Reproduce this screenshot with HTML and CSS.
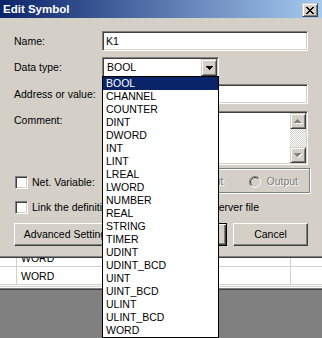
FILE: index.html
```html
<!DOCTYPE html>
<html>
<head>
<meta charset="utf-8">
<title>Edit Symbol</title>
<link rel="stylesheet" href="styles.css">
</head>
<body>
<div class="screen">
  <div class="sheet">
    <div class="sheet-row"><span></span><span>WORD</span><span></span></div>
    <div class="sheet-row"><span></span><span>WORD</span><span></span></div>
  </div>
  <div class="sheet-foot"></div>
  <div class="workspace"></div>

  <div class="dialog">
    <div class="caption">
      <span class="caption-title">Edit Symbol</span>
      <span class="close raised">
        <svg width="8" height="7" viewBox="0 0 8 7" shape-rendering="crispEdges"><path fill="#000" d="M0 0h2v1H0zM6 0h2v1H6zM1 1h2v1H1zM5 1h2v1H5zM2 2h4v1H2zM3 3h2v1H3zM2 4h4v1H2zM1 5h2v1H1zM5 5h2v1H5zM0 6h2v1H0zM6 6h2v1H6z"/></svg>
      </span>
    </div>
    <div class="dlg-body">
      <div class="field">
        <span class="lbl">Name:</span>
        <div class="edit">K1</div>
      </div>
      <div class="field field-combo">
        <span class="lbl">Data type:</span>
        <div class="combo">
          <span class="combo-text">BOOL</span>
          <span class="combo-btn raised">
            <svg width="7" height="4" viewBox="0 0 7 4" shape-rendering="crispEdges"><path fill="#000" d="M0 0h7v1H0zM1 1h5v1H1zM2 2h3v1H2zM3 3h1v1H3z"/></svg>
          </span>
          <ul class="droplist">
            <li class="selected">BOOL</li>
            <li>CHANNEL</li>
            <li>COUNTER</li>
            <li>DINT</li>
            <li>DWORD</li>
            <li>INT</li>
            <li>LINT</li>
            <li>LREAL</li>
            <li>LWORD</li>
            <li>NUMBER</li>
            <li>REAL</li>
            <li>STRING</li>
            <li>TIMER</li>
            <li>UDINT</li>
            <li>UDINT_BCD</li>
            <li>UINT</li>
            <li>UINT_BCD</li>
            <li>ULINT</li>
            <li>ULINT_BCD</li>
            <li>WORD</li>
          </ul>
        </div>
      </div>
      <div class="field field-addr">
        <span class="lbl">Address or value:</span>
        <div class="edit"></div>
      </div>
      <div class="field field-comment">
        <span class="lbl lbl-top">Comment:</span>
        <div class="memo">
          <div class="vscroll">
            <span class="sb-btn raised">
              <svg width="8" height="5" viewBox="0 0 8 5" shape-rendering="crispEdges"><path fill="#fff" d="M4 1h1v1H4zM3 2h3v1H3zM2 3h5v1H2zM1 4h7v1H1z"/><path fill="#808080" d="M3 0h1v1H3zM2 1h3v1H2zM1 2h5v1H1zM0 3h7v1H0z"/></svg>
            </span>
            <span class="sb-track"></span>
            <span class="sb-btn raised">
              <svg width="8" height="5" viewBox="0 0 8 5" shape-rendering="crispEdges"><path fill="#fff" d="M1 1h7v1H1zM2 2h5v1H2zM3 3h3v1H3zM4 4h1v1H4z"/><path fill="#808080" d="M0 0h7v1H0zM1 1h5v1H1zM2 2h3v1H2zM3 3h1v1H3z"/></svg>
            </span>
          </div>
        </div>
      </div>

      <div class="net-row">
        <label class="check"><span class="box"></span><span>Net. Variable:</span></label>
        <div class="io-group">
          <span class="radio radio-in">
            <svg width="12" height="12" viewBox="0 0 12 12"><circle cx="6" cy="6" r="5" fill="#d4d0c8"/><path d="M2.1 9.9A5.5 5.5 0 0 1 9.9 2.1" fill="none" stroke="#808080"/><path d="M9.9 2.1A5.5 5.5 0 0 1 2.1 9.9" fill="none" stroke="#fff"/><path d="M2.8 9.2A4.5 4.5 0 0 1 9.2 2.8" fill="none" stroke="#404040"/><path d="M9.2 2.8A4.5 4.5 0 0 1 2.8 9.2" fill="none" stroke="#d4d0c8"/></svg>
            <span class="radio-text">Input</span>
          </span>
          <span class="radio radio-out">
            <svg width="12" height="12" viewBox="0 0 12 12"><circle cx="6" cy="6" r="5" fill="#d4d0c8"/><path d="M2.1 9.9A5.5 5.5 0 0 1 9.9 2.1" fill="none" stroke="#808080"/><path d="M9.9 2.1A5.5 5.5 0 0 1 2.1 9.9" fill="none" stroke="#fff"/><path d="M2.8 9.2A4.5 4.5 0 0 1 9.2 2.8" fill="none" stroke="#404040"/><path d="M9.2 2.8A4.5 4.5 0 0 1 2.8 9.2" fill="none" stroke="#d4d0c8"/></svg>
            <span class="radio-text">Output</span>
          </span>
        </div>
      </div>

      <label class="check link-row"><span class="box"></span><span>Link the definition of symbol to the CX-Server file</span></label>

      <div class="buttons">
        <span class="btn btn-adv">Advanced Settings...</span>
        <span class="btn btn-default">OK</span>
        <span class="btn btn-cancel">Cancel</span>
      </div>
    </div>
  </div>
</div>
</body>
</html>
```
FILE: styles.css
```css
* { box-sizing: border-box; }

html, body {
  margin: 0;
  padding: 0;
}

body {
  width: 322px;
  height: 338px;
  overflow: hidden;
  font: 10.5px/13px "Liberation Sans", Arial, sans-serif;
  color: #000;
}

.screen {
  position: relative;
  width: 322px;
  height: 338px;
  display: flex;
  flex-direction: column;
  background: #808080;
}

/* background symbol sheet (upper rows hidden by the dialog) */
.sheet {
  background: #fff;
  padding-top: 249px;
  flex: none;
}

.sheet-row {
  display: grid;
  grid-template-columns: 17px 274px 1fr;
  height: 18px;
}

.sheet-row > span {
  border-right: 1px solid #d4d0c8;
  border-bottom: 1px solid #d4d0c8;
  padding-left: 4px;
  line-height: 19px;
  white-space: nowrap;
  overflow: hidden;
}

.sheet-row > span:last-child { border-right: none; }

.sheet-foot {
  flex: none;
  height: 5px;
  background: linear-gradient(to bottom, #fff 0 1px, #d4d0c8 1px 2px, #fff 2px 3px, #808080 3px 4px, #404040 4px 5px);
}

.workspace {
  flex: 1;
  background: #808080;
}

/* dialog window */
.dialog {
  position: absolute;
  left: 0;
  top: 0;
  width: 322px;
  height: 258px;
  background: #d4d0c8;
  border-bottom: 1px solid #404040;
  box-shadow: inset 0 -1px #808080;
  display: flex;
  flex-direction: column;
  z-index: 1;
}

.caption {
  flex: none;
  height: 18px;
  display: flex;
  align-items: flex-start;
  justify-content: space-between;
  padding: 0 4px 0 3px;
  background: linear-gradient(to right, #0a246a, #a6caf0);
  color: #fff;
  font: bold 11.5px/18px "Liberation Sans", Arial, sans-serif;
}

.caption-title { align-self: center; }

.raised {
  background: #d4d0c8;
  border: 1px solid;
  border-color: #d4d0c8 #404040 #404040 #d4d0c8;
  box-shadow: inset 1px 1px #fff, inset -1px -1px #808080;
  display: flex;
  align-items: center;
  justify-content: center;
}

.close {
  width: 16px;
  height: 14px;
  margin-top: 3px;
}

.close svg { display: block; margin-left: -1px; }

.dlg-body {
  flex: 1;
  padding: 13px 14px 0 14px;
  display: flex;
  flex-direction: column;
}

.field {
  display: flex;
  align-items: center;
}

.lbl {
  width: 88px;
  flex: none;
  white-space: nowrap;
}

.lbl-top {
  align-self: flex-start;
  padding-top: 3px;
}

.field-combo { margin-top: 6px; }
.field-addr { margin-top: 6px; }
.field-comment { margin-top: 7px; }

.edit,
.combo,
.memo {
  background: #fff;
  border: 1px solid;
  border-color: #808080 #fff #fff #808080;
  box-shadow: inset 1px 1px #404040, inset -1px -1px #d4d0c8;
}

.edit {
  width: 206px;
  height: 20px;
  padding: 0 3px;
  line-height: 18px;
}

.combo {
  position: relative;
  width: 117px;
  height: 21px;
  display: flex;
  padding: 1px;
}

.combo-text {
  flex: 1;
  padding-left: 3px;
  line-height: 17px;
}

.combo-btn {
  width: 16px;
  height: 17px;
}

.combo-btn svg { display: block; }

.droplist {
  position: absolute;
  left: -1px;
  top: 18px;
  width: 117px;
  margin: 0;
  padding: 0;
  list-style: none;
  background: #fff;
  border: 1px solid #000;
  z-index: 2;
}

.droplist li {
  height: 13px;
  line-height: 13px;
  padding-left: 3px;
  white-space: nowrap;
}

.droplist li.selected {
  background: #0a246a;
  color: #fff;
}

.memo {
  width: 206px;
  height: 54px;
  display: flex;
  justify-content: flex-end;
  padding: 1px;
}

.vscroll {
  width: 16px;
  display: flex;
  flex-direction: column;
}

.sb-btn {
  height: 16px;
  flex: none;
}

.sb-btn svg { display: block; }

.sb-track {
  flex: 1;
  background: repeating-conic-gradient(#d4d0c8 0 25%, #fff 0 50%) 0 0 / 2px 2px;
}

/* check rows */
.check {
  display: flex;
  align-items: center;
  gap: 4px;
  margin-left: 1px;
  white-space: nowrap;
}

.box {
  width: 13px;
  height: 13px;
  flex: none;
  background: #fff;
  border: 1px solid;
  border-color: #808080 #fff #fff #808080;
  box-shadow: inset 1px 1px #404040, inset -1px -1px #d4d0c8;
}

.net-row {
  margin-top: 3px;
  height: 25px;
  display: flex;
  align-items: flex-start;
}

.net-row .check {
  margin-top: 8px;
  flex: none;
}

.io-group {
  flex: none;
  margin-left: auto;
  margin-right: -2px;
  width: 160px;
  height: 25px;
  border: 1px solid #808080;
  box-shadow: inset 1px 1px #fff, 1px 1px #fff;
  display: flex;
  align-items: center;
  justify-content: flex-end;
  padding: 2px 11px 0 0;
}

.radio {
  flex: none;
  display: flex;
  align-items: center;
  color: #808080;
  text-shadow: 1px 1px 0 #fff;
}

.radio svg { display: block; flex: none; }

.radio-text { margin-left: 5px; }

.radio-out { margin-left: 26px; }

.link-row {
  margin-top: 8px;
  overflow: hidden;
}

/* buttons */
.buttons {
  margin-top: 9px;
  display: flex;
}

.btn {
  height: 23px;
  display: flex;
  align-items: center;
  justify-content: center;
  white-space: nowrap;
  background: #d4d0c8;
  border: 1px solid;
  border-color: #fff #404040 #404040 #fff;
  box-shadow: inset -1px -1px #808080;
}

.btn-adv { width: 116px; }

.btn-default {
  width: 75px;
  margin-left: auto;
  border: 1px solid #000;
  box-shadow: inset 1px 1px #fff, inset -1px -1px #404040, inset -2px -2px #808080;
}

.btn-cancel {
  width: 75px;
  margin-left: 6px;
}
```
